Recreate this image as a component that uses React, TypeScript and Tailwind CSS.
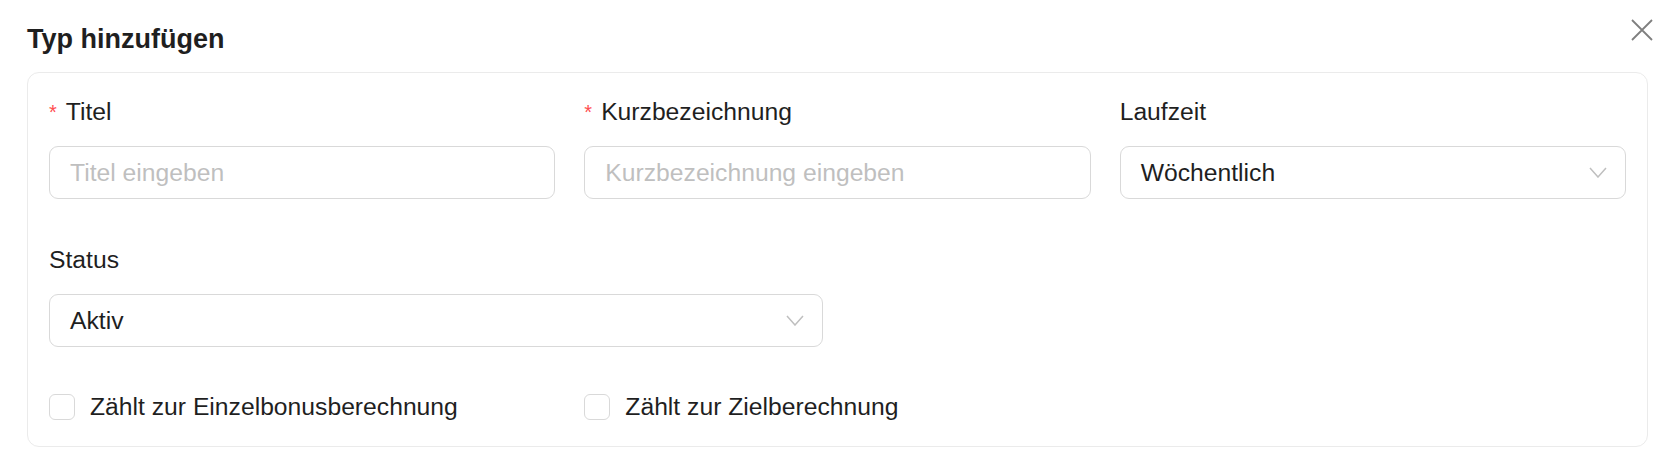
const font = { fontFamily: '"Liberation Sans", Arial, sans-serif' }

function Chevron() {
  return (
    <svg width="18" height="11" viewBox="0 0 18 11" fill="none" className="shrink-0">
      <polyline points="1,1 9,10 17,1" stroke="#bfbfbf" strokeWidth="1.5" />
    </svg>
  )
}

function Label({ text, required }: { text: string; required?: boolean }) {
  return (
    <div className="flex items-center text-[24.7px] leading-[36px] text-[#1f1f1f]">
      {required && <span className="mr-[9px] text-[20px] text-[#ff4d4f]">*</span>}
      {text}
    </div>
  )
}

function TextInput({ placeholder }: { placeholder: string }) {
  return (
    <div className="mt-[16px] flex h-[53px] items-center rounded-[9px] border border-[#d9d9d9] bg-white px-[20px] text-[24.7px] text-[#bfbfbf]">
      {placeholder}
    </div>
  )
}

function SelectBox({ value }: { value: string }) {
  return (
    <div className="mt-[16px] flex h-[53px] items-center justify-between rounded-[9px] border border-[#d9d9d9] bg-white pl-[20px] pr-[18px] text-[24.7px] text-[#1f1f1f]">
      <span>{value}</span>
      <Chevron />
    </div>
  )
}

function Check({ label }: { label: string }) {
  return (
    <div className="flex h-[36px] items-center text-[24.7px] text-[#1f1f1f]">
      <span className="h-[26px] w-[26px] shrink-0 rounded-[6px] border border-[#d9d9d9] bg-white" />
      <span className="ml-[15px]">{label}</span>
    </div>
  )
}

export default function App() {
  return (
    <div className="h-[455px] w-full bg-white" style={font}>
      <div className="flex items-start justify-between pl-[27px] pr-[27px] pt-[21px]">
        <h1 className="text-[27px] font-bold leading-[36px] text-[#1f1f1f]">Typ hinzufügen</h1>
        <svg width="22" height="22" viewBox="0 0 22 22" className="-mt-[2px]">
          <path d="M1 1 L21 21 M21 1 L1 21" stroke="#7f7f7f" strokeWidth="1.8" />
        </svg>
      </div>
      <div className="ml-[27px] mr-[32px] mt-[15px] rounded-[12px] border border-[#ebebeb] px-[21px] pb-[21px] pt-[21px]">
        <div className="grid grid-cols-3 gap-x-[29px]">
          <div>
            <Label text="Titel" required />
            <TextInput placeholder="Titel eingeben" />
          </div>
          <div>
            <Label text="Kurzbezeichnung" required />
            <TextInput placeholder="Kurzbezeichnung eingeben" />
          </div>
          <div>
            <Label text="Laufzeit" />
            <SelectBox value="Wöchentlich" />
          </div>
        </div>
        <div className="mt-[43px] grid grid-cols-2 gap-x-[29px]">
          <div>
            <Label text="Status" />
            <SelectBox value="Aktiv" />
          </div>
        </div>
        <div className="mt-[42px] grid grid-cols-3 gap-x-[29px]">
          <Check label="Zählt zur Einzelbonusberechnung" />
          <Check label="Zählt zur Zielberechnung" />
        </div>
      </div>
    </div>
  )
}
